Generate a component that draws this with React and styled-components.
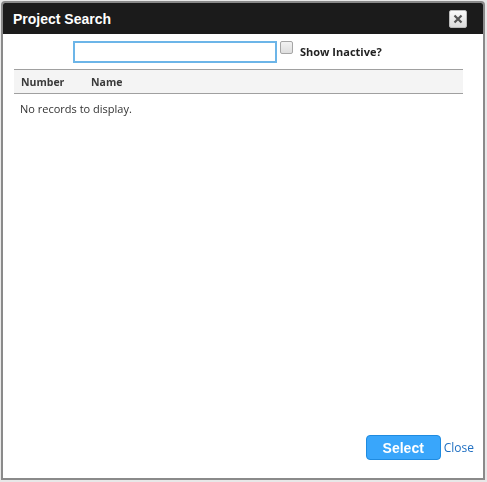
import React from 'react';
import styled, { createGlobalStyle } from 'styled-components';

const GlobalStyle = createGlobalStyle`
    html, body {
        margin: 0;
        padding: 0;
        background: #fff;
    }
    body {
        font-family: "Open Sans", "DejaVu Sans", sans-serif;
    }
`;

const Page = styled.div`
    width: 487px;
    height: 482px;
    padding: 1px 2px 2px 1px;
    box-sizing: border-box;
    background: #e8e8e8;
`;

const Dialog = styled.div`
    height: 100%;
    box-sizing: border-box;
    border: 2px solid #8a8a8a;
    border-radius: 4px 4px 0 0;
    background: #fff;
    display: flex;
    flex-direction: column;
    overflow: hidden;
`;

const TitleBar = styled.div`
    height: 31px;
    background: #1b1b1b;
    display: flex;
    align-items: center;
    justify-content: space-between;
    padding: 0 16px 0 10px;
`;

const Title = styled.h2`
    margin: 0;
    font-family: "Liberation Sans", Arial, sans-serif;
    font-size: 14px;
    font-weight: bold;
    color: #fff;
`;

const CloseX = styled.button`
    width: 18px;
    height: 18px;
    padding: 0;
    border: 1px solid #bbb;
    border-radius: 2px;
    background: linear-gradient(#fafafa, #dcdcdc);
    display: flex;
    align-items: center;
    justify-content: center;
    cursor: pointer;
`;

const Body = styled.div`
    flex: 1;
    display: flex;
    flex-direction: column;
    padding: 6px 20px 18px 10px;
`;

const SearchRow = styled.div`
    display: flex;
    align-items: center;
    padding-left: 60px;
    height: 23px;
`;

const SearchInput = styled.input`
    width: 204px;
    height: 22px;
    box-sizing: border-box;
    border: 2px solid #6cb5e8;
    outline: none;
    padding: 0 2px;
    font-size: 12px;
`;

const Check = styled.span`
    width: 11px;
    height: 11px;
    margin: 1px 7px 0 3px;
    border: 1px solid #a6a6a6;
    border-radius: 2px;
    background: linear-gradient(#f2f2f2, #dedede);
    align-self: flex-start;
`;

const CheckLabel = styled.span`
    font-size: 11px;
    font-weight: bold;
    color: #222;
`;

const Table = styled.div`
    margin: 6px 0 0 1px;
`;

const HeadRow = styled.div`
    display: flex;
    height: 23px;
    align-items: center;
    background: #f4f4f4;
    border-top: 1px solid #a0a0a0;
    border-bottom: 1px solid #a0a0a0;
    padding-left: 7px;
`;

const HeadCell = styled.div`
    width: ${(p) => p.$w}px;
    font-size: 10.5px;
    font-weight: bold;
    color: #3a3a3a;
`;

const Empty = styled.div`
    padding: 7px 0 0 6px;
    font-size: 11px;
    color: #333;
`;

const Footer = styled.div`
    margin-top: auto;
    display: flex;
    align-items: center;
    justify-content: flex-end;
    gap: 3px;
    margin-right: -11px;
`;

const SelectButton = styled.button`
    width: 75px;
    height: 25px;
    border: 1px solid #1f8be0;
    border-radius: 4px;
    background: #39a6fb;
    color: #fff;
    font-family: "Liberation Sans", Arial, sans-serif;
    font-size: 14px;
    font-weight: bold;
    cursor: pointer;
`;

const CloseLink = styled.a`
    color: #1f6fc2;
    font-size: 12px;
    text-decoration: none;
    cursor: pointer;
`;

export default function App() {
    return (
        <>
            <GlobalStyle />
            <Page>
                <Dialog>
                    <TitleBar>
                        <Title>Project Search</Title>
                        <CloseX aria-label="close">
                            <svg width="10" height="10" viewBox="0 0 10 10">
                                <path d="M1.5 1.5 L8.5 8.5 M8.5 1.5 L1.5 8.5" stroke="#555" strokeWidth="2.2" />
                            </svg>
                        </CloseX>
                    </TitleBar>
                    <Body>
                        <SearchRow>
                            <SearchInput autoFocus />
                            <Check />
                            <CheckLabel>Show Inactive?</CheckLabel>
                        </SearchRow>
                        <Table>
                            <HeadRow>
                                <HeadCell $w={70}>Number</HeadCell>
                                <HeadCell $w={100}>Name</HeadCell>
                            </HeadRow>
                            <Empty>No records to display.</Empty>
                        </Table>
                        <Footer>
                            <SelectButton>Select</SelectButton>
                            <CloseLink>Close</CloseLink>
                        </Footer>
                    </Body>
                </Dialog>
            </Page>
        </>
    );
}
